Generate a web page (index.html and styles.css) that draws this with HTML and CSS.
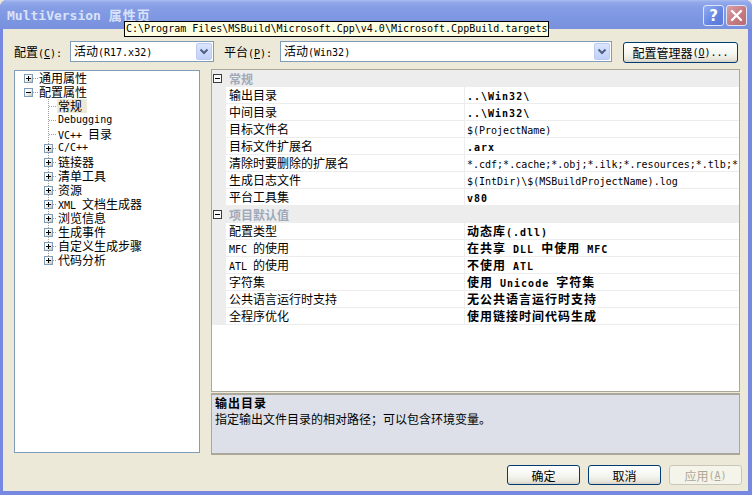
FILE: index.html
```html
<!DOCTYPE html>
<html lang="zh-CN">
<head>
<meta charset="utf-8">
<title>MultiVersion 属性页</title>
<link rel="stylesheet" href="styles.css">
</head>
<body>
<div class="window">
  <div class="titlebar">
    <div class="title"><span class="a">MultiVersion </span>属性页</div>
    <div class="cbtns">
      <div class="cbtn help">?</div>
      <div class="cbtn close"><svg width="19" height="19" viewBox="0 0 19 19"><path d="M5 5 L14 14 M14 5 L5 14" stroke="#fff" stroke-width="2.4" stroke-linecap="round"/></svg></div>
    </div>
  </div>
  <div class="frame">
    <div class="toprow">
      <span class="lbl">配置<span class="a">(<u>C</u>):</span></span>
      <div class="combo combo1"><span class="combo-text">活动<span class="a">(R17.x32)</span></span><span class="combo-btn"><svg width="14" height="15" viewBox="0 0 14 15"><path d="M3.5 5.5 L7 9 L10.5 5.5" fill="none" stroke="#4d6185" stroke-width="2"/></svg></span></div>
      <span class="lbl lbl2">平台<span class="a">(<u>P</u>):</span></span>
      <div class="combo combo2"><span class="combo-text">活动<span class="a">(Win32)</span></span><span class="combo-btn"><svg width="14" height="15" viewBox="0 0 14 15"><path d="M3.5 5.5 L7 9 L10.5 5.5" fill="none" stroke="#4d6185" stroke-width="2"/></svg></span></div>
      <div class="btn cfgmgr">配置管理器<span class="a">(<u>O</u>)...</span></div>
    </div>
    <div class="main">
      <div class="tree">
        <div class="node l0"><span class="gut"><i class="box plus"></i></span><span class="lab">通用属性</span></div>
        <div class="node l0"><span class="gut"><i class="box"></i></span><span class="lab">配置属性</span></div>
        <div class="node l1"><span class="gut"></span><span class="lab sel">常规</span></div>
        <div class="node l1"><span class="gut"></span><span class="lab a">Debugging</span></div>
        <div class="node l1"><span class="gut"></span><span class="lab"><span class="a">VC++ </span>目录</span></div>
        <div class="node l1"><span class="gut"><i class="box plus"></i></span><span class="lab a">C/C++</span></div>
        <div class="node l1"><span class="gut"><i class="box plus"></i></span><span class="lab">链接器</span></div>
        <div class="node l1"><span class="gut"><i class="box plus"></i></span><span class="lab">清单工具</span></div>
        <div class="node l1"><span class="gut"><i class="box plus"></i></span><span class="lab">资源</span></div>
        <div class="node l1"><span class="gut"><i class="box plus"></i></span><span class="lab"><span class="a">XML </span>文档生成器</span></div>
        <div class="node l1"><span class="gut"><i class="box plus"></i></span><span class="lab">浏览信息</span></div>
        <div class="node l1"><span class="gut"><i class="box plus"></i></span><span class="lab">生成事件</span></div>
        <div class="node l1"><span class="gut"><i class="box plus"></i></span><span class="lab">自定义生成步骤</span></div>
        <div class="node l1 last"><span class="gut"><i class="box plus"></i></span><span class="lab">代码分析</span></div>
      </div>
      <div class="right">
        <div class="grid">
          <div class="row cat"><span class="mg"><i class="cbox"></i></span><span class="catname">常规</span></div>
          <div class="row"><span class="mg"></span><span class="pn">输出目录</span><span class="pv b"><span class="a">..\Win32\</span></span></div>
          <div class="row"><span class="mg"></span><span class="pn">中间目录</span><span class="pv b"><span class="a">..\Win32\</span></span></div>
          <div class="row"><span class="mg"></span><span class="pn">目标文件名</span><span class="pv"><span class="a">$(ProjectName)</span></span></div>
          <div class="row"><span class="mg"></span><span class="pn">目标文件扩展名</span><span class="pv b"><span class="a">.arx</span></span></div>
          <div class="row"><span class="mg"></span><span class="pn">清除时要删除的扩展名</span><span class="pv"><span class="a">*.cdf;*.cache;*.obj;*.ilk;*.resources;*.tlb;*.tli;*.tlh;*.tmp;*.rsp;*.pgc;*.pgd;*.meta;$(TargetPath)</span></span></div>
          <div class="row"><span class="mg"></span><span class="pn">生成日志文件</span><span class="pv"><span class="a">$(IntDir)\$(MSBuildProjectName).log</span></span></div>
          <div class="row"><span class="mg"></span><span class="pn">平台工具集</span><span class="pv b"><span class="a">v80</span></span></div>
          <div class="row cat"><span class="mg"><i class="cbox"></i></span><span class="catname">项目默认值</span></div>
          <div class="row"><span class="mg"></span><span class="pn">配置类型</span><span class="pv b">动态库<span class="a">(.dll)</span></span></div>
          <div class="row"><span class="mg"></span><span class="pn"><span class="a">MFC </span>的使用</span><span class="pv b">在共享<span class="a"> DLL </span>中使用<span class="a"> MFC</span></span></div>
          <div class="row"><span class="mg"></span><span class="pn"><span class="a">ATL </span>的使用</span><span class="pv b">不使用<span class="a"> ATL</span></span></div>
          <div class="row"><span class="mg"></span><span class="pn">字符集</span><span class="pv b">使用<span class="a"> Unicode </span>字符集</span></div>
          <div class="row"><span class="mg"></span><span class="pn">公共语言运行时支持</span><span class="pv b">无公共语言运行时支持</span></div>
          <div class="row"><span class="mg"></span><span class="pn">全程序优化</span><span class="pv b">使用链接时间代码生成</span></div>
        </div>
        <div class="desc">
          <div class="desc-title b">输出目录</div>
          <div>指定输出文件目录的相对路径；可以包含环境变量。</div>
        </div>
      </div>
    </div>
    <div class="bottom">
      <div class="btn dlg">确定</div>
      <div class="btn dlg">取消</div>
      <div class="btn dlg disabled">应用<span class="a">(<u>A</u>)</span></div>
    </div>
  </div>
  <div class="tooltip">C:\Program Files\MSBuild\Microsoft.Cpp\v4.0\Microsoft.CppBuild.targets</div>
</div>
</body>
</html>
```

FILE: styles.css
```css
* { box-sizing: border-box; }
html, body { margin: 0; padding: 0; }
html { background: #ece9d8; }
body {
  width: 752px;
  height: 495px;
  overflow: hidden;
  font: 12px "Noto Sans CJK SC", sans-serif;
  color: #000;
}
.a { font-family: "DejaVu Sans Mono", monospace; font-size: 10px; }
.b { font-weight: bold; letter-spacing: 1px; }

.window {
  position: relative;
  width: 752px;
  height: 495px;
  display: flex;
  flex-direction: column;
  background: #7788e0;
  border-radius: 7px 7px 0 0;
  overflow: hidden;
}

/* title bar */
.titlebar {
  height: 29px;
  flex: none;
  display: flex;
  align-items: center;
  justify-content: space-between;
  padding: 2px 5px 0 7px;
  background: linear-gradient(#aabdf0 0, #93a9ea 2px, #869ee5 7px, #7e97e2 60%, #7990de 100%);
}
.title {
  color: #d9e2f8;
  font-weight: bold;
  font-size: 13px;
  letter-spacing: 1px;
  line-height: 16px;
  white-space: nowrap;
}
.title .a { font-size: 13px; letter-spacing: 0; }
.cbtns { display: flex; gap: 2px; }
.cbtn {
  width: 21px;
  height: 21px;
  border: 1px solid #dde5f9;
  border-radius: 3px;
  display: flex;
  align-items: center;
  justify-content: center;
}
.help {
  background: linear-gradient(135deg, #94aef2, #6383e2 60%, #5a79dc);
  color: #fff;
  font: bold 15px "DejaVu Sans", sans-serif;
}
.close { background: linear-gradient(135deg, #dba0a7, #c4787f 60%, #b86b74); }

/* frame / client */
.frame {
  flex: 1;
  display: flex;
  flex-direction: column;
  border-style: solid;
  border-color: #7788e0;
  border-width: 0 4px 4px 3px;
  background: #ece9d8;
  padding: 12px 8px 6px 11px;
}

.toprow { display: flex; align-items: flex-start; height: 21px; }
.lbl { width: 56px; line-height: 21px; white-space: nowrap; }
.lbl2 { margin-left: 10px; }
.combo {
  height: 21px;
  border: 1px solid #7f9db9;
  background: #fff;
  display: flex;
  align-items: center;
}
.combo1 { width: 144px; }
.combo2 { width: 332px; }
.combo-text { flex: 1; padding-left: 3px; line-height: 19px; white-space: nowrap; overflow: hidden; }
.combo-btn {
  width: 16px;
  height: 17px;
  margin-right: 1px;
  border: 1px solid #bccbef;
  border-radius: 2px;
  background: linear-gradient(#dbe5fd, #c0d0f9);
  display: flex;
}

.btn {
  height: 21px;
  border: 1px solid #003c74;
  border-radius: 3px;
  background: linear-gradient(#ffffff, #f5f5f1 55%, #e8e6dc 85%, #d6d0c5);
  display: flex;
  align-items: center;
  justify-content: center;
  line-height: 19px;
  white-space: nowrap;
}
.cfgmgr { width: 115px; margin-left: 11px; margin-top: 1px; }

/* main area */
.main { display: flex; margin-top: 7px; height: 386px; }

.tree {
  width: 186px;
  height: 383px;
  margin-top: 1px;
  border: 1px solid #7f9db9;
  background: #fff;
}
.node { display: flex; height: 14px; line-height: 14px; white-space: nowrap; }
.l0 { padding-left: 9px; }
.l1 { padding-left: 29px; }
.gut { position: relative; width: 14px; flex: none; display: flex; align-items: center; }
.l1 .gut { width: 13px; }
.gut::before {
  content: "";
  position: absolute;
  left: 5px;
  right: 0;
  top: 7px;
  height: 1px;
  background: repeating-linear-gradient(to right, #a0a0a0 0 1px, transparent 1px 2px);
}
.l1 .gut::after {
  content: "";
  position: absolute;
  left: 4px;
  top: 0;
  bottom: 0;
  width: 1px;
  background: repeating-linear-gradient(to bottom, #a0a0a0 0 1px, transparent 1px 2px);
}
.l1.last .gut::after { bottom: 7px; }
.box {
  position: relative;
  z-index: 1;
  width: 9px;
  height: 9px;
  border: 1px solid #7f9db9;
  background: linear-gradient(135deg, #ffffff 35%, #c8c5b6);
}
.box::before {
  content: "";
  position: absolute;
  left: 1px;
  top: 3px;
  width: 5px;
  height: 1px;
  background: #000;
}
.box.plus::after {
  content: "";
  position: absolute;
  left: 3px;
  top: 1px;
  width: 1px;
  height: 5px;
  background: #000;
}
.lab { padding: 0 5px 0 1px; }
.sel { background: #ece9d8; }

.right { width: 529px; margin-left: 11px; display: flex; flex-direction: column; }
.grid {
  height: 323px;
  border: 1px solid #aca899;
  background: #fff;
  overflow: hidden;
}
.row { display: flex; height: 17px; line-height: 16px; }
.mg { width: 14px; flex: none; background: #ededed; display: flex; align-items: center; padding-left: 1px; }
.pn {
  width: 239px;
  flex: none;
  border-right: 1px solid #ededed;
  border-bottom: 1px solid #ededed;
  padding-left: 3px;
  white-space: nowrap;
  overflow: hidden;
}
.pv {
  flex: 1;
  border-bottom: 1px solid #ededed;
  padding-left: 2px;
  white-space: nowrap;
  overflow: hidden;
}
.cat { background: #ededed; }
.catname { padding-left: 3px; font-weight: bold; color: #a0a9ba; line-height: 17px; }
.cbox {
  position: relative;
  width: 9px;
  height: 9px;
  border: 1px solid #3c3c3c;
  background: #fbfbfb;
}
.cbox::before {
  content: "";
  position: absolute;
  left: 1px;
  top: 3px;
  width: 5px;
  height: 1px;
  background: #000;
}

.desc {
  height: 62px;
  margin-top: 1px;
  border: 1px solid #aca899;
  border-width: 2px 1px 2px 1px;
  background: #dde0e8;
  padding: 0 3px;
  line-height: 16px;
  white-space: nowrap;
}

/* bottom buttons */
.bottom {
  display: flex;
  justify-content: flex-end;
  gap: 8px;
  margin-top: 10px;
  margin-right: -2px;
  height: 20px;
}
.dlg { width: 73px; height: 20px; }
.disabled {
  border-color: #c9c7ba;
  background: #f5f4ea;
  color: #aca899;
}

/* tooltip overlay */
.tooltip {
  position: absolute;
  left: 124px;
  top: 21px;
  width: 425px;
  height: 16px;
  border: 1px solid #000;
  background: #ffffe1;
  font: 10px "DejaVu Sans Mono", monospace;
  line-height: 14px;
  padding-left: 1px;
  white-space: nowrap;
}
```
